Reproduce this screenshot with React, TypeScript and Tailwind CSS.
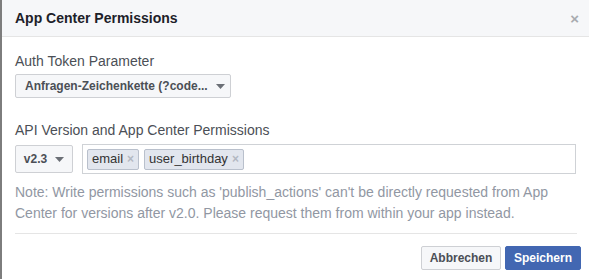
const Caret = () => (
  <svg width="9" height="5" viewBox="0 0 9 5" className="ml-2 shrink-0">
    <path d="M0 0 L9 0 L4.5 5 Z" fill="#6b6f76" />
  </svg>
);

const Token = ({ label }: { label: string }) => (
  <span className="flex items-center h-[21px] px-[4px] bg-[#e2e6ee] border border-[#b9c0cc] rounded-[2px] text-[13px] text-[#333]">
    {label}
    <span className="ml-[4px] text-[12px] font-bold text-[#b3b8c2]">×</span>
  </span>
);

export default function App() {
  return (
    <div
      className="w-[589px] h-[279px] bg-white border-l-2 border-[#7d7d7d] overflow-hidden"
      style={{ fontFamily: '"Liberation Sans", Arial, sans-serif' }}
    >
      {/* header */}
      <div className="flex items-center justify-between h-[37px] bg-[#f6f7f9] border-b border-[#e5e5e5] pl-[13px] pr-[10px]">
        <p className="font-bold text-[14px] text-[#1d2129]">App Center Permissions</p>
        <span className="text-[15px] font-bold text-[#a8abb0] leading-none">×</span>
      </div>

      <div className="pl-[13px] pr-[12px]">
        <p className="mt-[15px] text-[14px] leading-[18px] text-[#4b4f56]">Auth Token Parameter</p>
        <button className="mt-[4px] flex items-center justify-between whitespace-nowrap h-[24px] w-[216px] pl-[9px] pr-[8px] bg-[#f6f7f9] border border-[#ced0d4] rounded-[2px] text-[12px] font-bold text-[#4b4f56]">
          <span>Anfragen-Zeichenkette (?code...</span>
          <Caret />
        </button>

        <p className="mt-[23px] text-[14px] leading-[18px] text-[#4b4f56]">API Version and App Center Permissions</p>
        <div className="mt-[5px] flex items-center gap-[9px]">
          <button className="flex items-center justify-center h-[28px] w-[58px] bg-[#f6f7f9] border border-[#ced0d4] rounded-[2px] text-[12px] font-bold text-[#4b4f56]">
            v2.3
            <Caret />
          </button>
          <div className="flex items-center gap-[5px] h-[30px] w-[494px] px-[4px] border border-[#cfd2d6] bg-white">
            <Token label="email" />
            <Token label="user_birthday" />
          </div>
        </div>

        <p className="mt-[8px] w-[560px] text-[14px] leading-[21px] text-[#9197a3]">
          Note: Write permissions such as 'publish_actions' can't be directly requested from App Center for versions after v2.0. Please request them from within your app instead.
        </p>

        <div className="mt-[9px] w-[562px] border-t border-[#e5e5e5]" />

        <div className="mt-[12px] w-[566px] flex justify-end gap-[4px]">
          <button className="h-[24px] w-[80px] bg-[#f6f7f9] border border-[#ced0d4] rounded-[2px] text-[12px] font-bold text-[#4b4f56]">
            Abbrechen
          </button>
          <button className="h-[24px] w-[76px] bg-[#4267b2] border border-[#4267b2] rounded-[2px] text-[12px] font-bold text-white">
            Speichern
          </button>
        </div>
      </div>
    </div>
  );
}
